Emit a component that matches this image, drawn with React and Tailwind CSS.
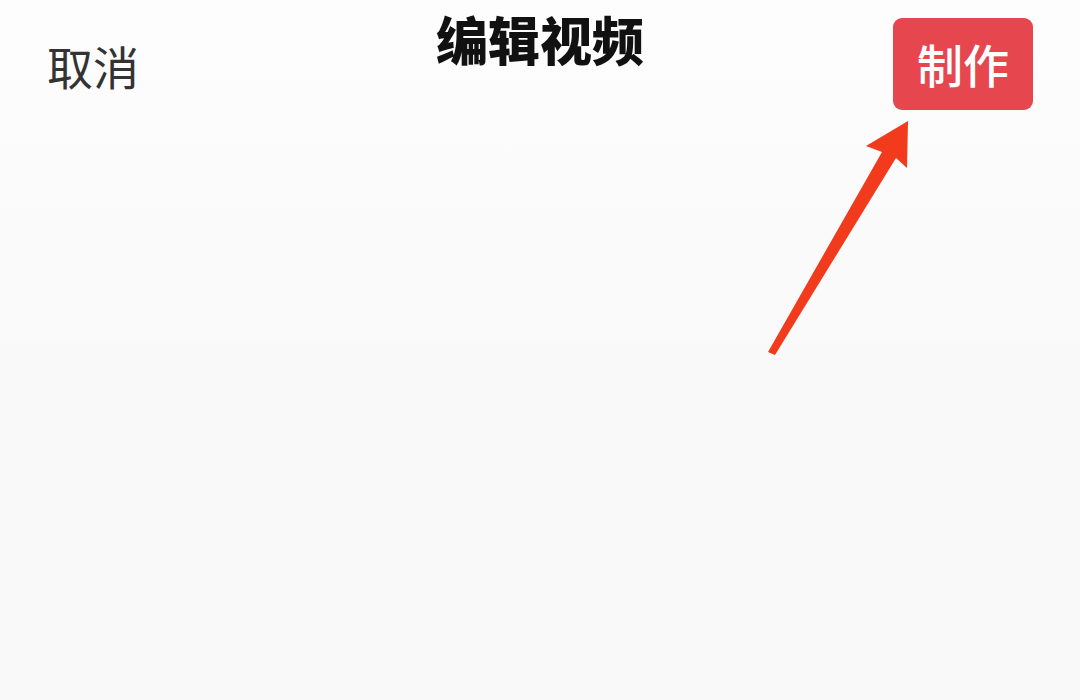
export default function App() {
  const font = { fontFamily: '"Noto Sans CJK SC", "Noto Sans", sans-serif' };
  return (
    <div className="relative w-[1080px] h-[700px] overflow-hidden bg-linear-to-b from-[#fdfdfd] via-[#f9f9f9] to-[#f9f9f9]" style={font}>
      <div className="grid grid-cols-[1fr_auto_1fr] items-start h-[118px]">
        <div className="pl-[47px] pt-[42px] text-[46px] leading-none text-[#333333]">取消</div>
        <div className="pt-[13px] text-[52px] leading-none font-black text-[#111111]">编辑视频</div>
        <div className="flex justify-end pr-[47px] pt-[18px]">
          <button className="w-[140px] h-[92px] rounded-[9px] bg-[#e6474f] text-white text-[46px] leading-none font-medium flex items-center justify-center pb-[2px]">
            制作
          </button>
        </div>
      </div>
      <svg className="absolute left-0 top-0 pointer-events-none" width="1080" height="700" viewBox="0 0 1080 700">
        <polygon
          points="768,352 882,152 866,146 908,121 907,168 896,158 775,355"
          fill="#f23a1d"
        />
      </svg>
    </div>
  );
}
